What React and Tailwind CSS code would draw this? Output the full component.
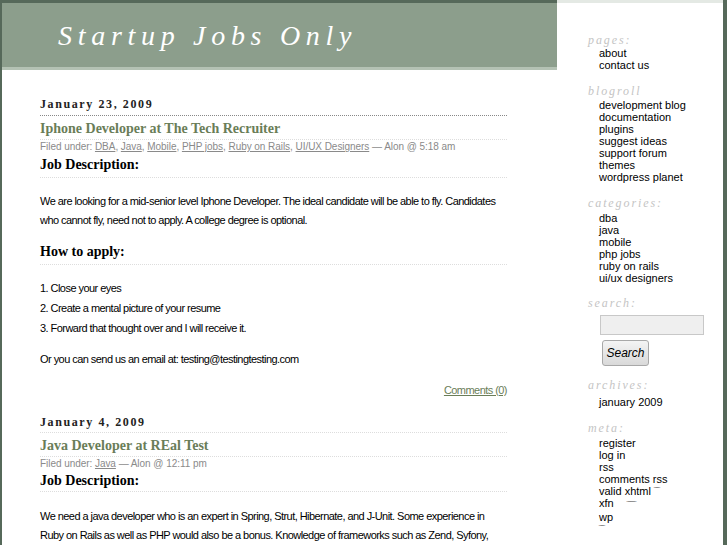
import React from 'react';

const serif = { fontFamily: '"Liberation Serif", "Times New Roman", serif' };
const sans = { fontFamily: '"Liberation Sans", Arial, sans-serif' };

const sidebar = [
    { title: 'pages:', items: ['about', 'contact us'] },
    {
        title: 'blogroll',
        items: ['development blog', 'documentation', 'plugins', 'suggest ideas', 'support forum', 'themes', 'wordpress planet'],
    },
    { title: 'categories:', items: ['dba', 'java', 'mobile', 'php jobs', 'ruby on rails', 'ui/ux designers'] },
];

const SideHeading = ({ children, className = '' }) => (
    <h2 style={serif} className={`text-[12px] leading-[14px] italic tracking-[1.9px] text-[#c4c4c4] ${className}`}>
        {children}
    </h2>
);

const SideList = ({ items, className = '' }) => (
    <ul style={sans} className={`pl-[11px] text-[11px] leading-[12px] text-black ${className}`}>
        {items.map((it) => (
            <li key={it}>{it}</li>
        ))}
    </ul>
);

const Filed = ({ cats, time }) => (
    <div style={sans} className="text-[10px] leading-[14px] tracking-[-0.05px] text-[#8a8a8a]">
        Filed under:{' '}
        {cats.map((c, i) => (
            <span key={c}>
                <a className="underline">{c}</a>
                {i < cats.length - 1 ? ', ' : ''}
            </span>
        ))}{' '}
        — Alon @ {time}
    </div>
);

const Body = ({ children, className = '' }) => (
    <p style={sans} className={`text-[11px] leading-[19px] tracking-[-0.55px] text-black ${className}`}>
        {children}
    </p>
);

export default function App() {
    return (
        <div className="w-[727px] h-[545px] overflow-hidden bg-white flex border-l-2 border-r-4 border-[#56695a]">
            {/* main column */}
            <div className="w-[555px] shrink-0">
                <div className="h-[70px] border-t-[3px] border-[#56695a] bg-[#8c9e8c] flex flex-col">
                    <div className="flex-1 flex items-center pl-[56px] pt-[1px]">
                        <h1 style={serif} className="text-[28px] italic tracking-[5.7px] text-white leading-none">
                            Startup Jobs Only
                        </h1>
                    </div>
                    <div className="h-[3px] bg-[#b4c2b4]" />
                </div>

                <div className="pl-[38px] pr-[50px]">
                    {/* post 1 */}
                    <div style={serif} className="mt-[26px] text-[12px] leading-[16px] tracking-[1.6px] font-bold text-[#222] pb-[3px] border-b border-dotted border-[#888]">
                        January 23, 2009
                    </div>
                    <h3 style={serif} className="mt-[3px] text-[14px] leading-[20px] font-bold text-[#6a7d58] border-b border-dotted border-[#ddd]">
                        Iphone Developer at The Tech Recruiter
                    </h3>
                    <Filed cats={['DBA', 'Java', 'Mobile', 'PHP jobs', 'Ruby on Rails', 'UI/UX Designers']} time="5:18 am" />
                    <h4 style={serif} className="mt-[1px] text-[14px] leading-[20px] font-bold text-black pb-[2px] border-b border-dotted border-[#ddd]">
                        Job Description:
                    </h4>
                    <Body className="mt-[14px]">
                        We are looking for a mid-senior level Iphone Developer. The ideal candidate will be able to fly. Candidates who cannot fly, need not to apply. A college degree is optional.
                    </Body>
                    <h4 style={serif} className="mt-[12px] text-[14px] leading-[20px] font-bold text-black pb-[2px] border-b border-dotted border-[#ddd]">
                        How to apply:
                    </h4>
                    <div style={sans} className="mt-[13px] text-[11px] leading-[20px] tracking-[-0.55px] text-black">
                        <div>1. Close your eyes</div>
                        <div>2. Create a mental picture of your resume</div>
                        <div>3. Forward that thought over and I will receive it.</div>
                    </div>
                    <Body className="mt-[11px] leading-[20px]">Or you can send us an email at: testing@testingtesting.com</Body>
                    <div style={sans} className="mt-[11px] text-right text-[11px] leading-[20px] tracking-[-0.55px] text-[#6a7d58] underline">
                        Comments (0)
                    </div>

                    {/* post 2 */}
                    <div style={serif} className="mt-[14px] text-[12px] leading-[16px] tracking-[1.6px] font-bold text-[#222] pb-[2px] border-b border-dotted border-[#ddd]">
                        January 4, 2009
                    </div>
                    <h3 style={serif} className="mt-[3px] text-[14px] leading-[20px] font-bold text-[#6a7d58] border-b border-dotted border-[#ddd]">
                        Java Developer at REal Test
                    </h3>
                    <Filed cats={['Java']} time="12:11 pm" />
                    <h4 style={serif} className="text-[14px] leading-[20px] font-bold text-black border-b border-dotted border-[#ddd]">
                        Job Description:
                    </h4>
                    <Body className="mt-[15px]">
                        We need a java developer who is an expert in Spring, Strut, Hibernate, and J-Unit. Some experience in Ruby on Rails as well as PHP would also be a bonus. Knowledge of frameworks such as Zend, Syfony, CakePHP is also a plus.
                    </Body>
                </div>
            </div>

            {/* sidebar */}
            <div className="flex-1 border-t-[3px] border-[#e4e9e4] pl-[31px] pt-[30px]">
                <SideHeading>{sidebar[0].title}</SideHeading>
                <SideList items={sidebar[0].items} />

                <SideHeading className="mt-[13px]">{sidebar[1].title}</SideHeading>
                <SideList items={sidebar[1].items} className="mt-[1px]" />

                <SideHeading className="mt-[13px]">{sidebar[2].title}</SideHeading>
                <SideList items={sidebar[2].items} className="mt-[2px]" />

                <SideHeading className="mt-[12px]">search:</SideHeading>
                <div className="pl-[12px]">
                    <input
                        type="text"
                        className="mt-[5px] block w-[104px] h-[20px] bg-[#efefef] border border-[#c8c8c8] outline-none"
                    />
                    <button
                        style={sans}
                        className="mt-[5px] ml-[2px] block w-[47px] h-[26px] rounded-[3px] border border-[#a8a8a8] bg-gradient-to-b from-[#f4f4f4] to-[#d9d9d9] text-[12px] italic text-black"
                    >
                        Search
                    </button>
                </div>

                <SideHeading className="mt-[12px]">archives:</SideHeading>
                <SideList items={['january 2009']} className="mt-[4px]" />

                <SideHeading className="mt-[13px]">meta:</SideHeading>
                <ul style={sans} className="mt-[2px] pl-[11px] text-[11px] leading-[12px] text-black">
                    <li>register</li>
                    <li>log in</li>
                    <li>rss</li>
                    <li>comments rss</li>
                    <li>
                        valid xhtml <span className="text-[8px] align-top tracking-[-1px] text-[#555]">‾‾‾</span>
                    </li>
                    <li>
                        xfn <span className="ml-[10px] text-[8px] tracking-[-1px] text-[#555]">‾‾‾‾‾</span>
                    </li>
                    <li>wp</li>
                    <li className="text-[8px] tracking-[-1px] text-[#555]">‾‾‾</li>
                </ul>
            </div>
        </div>
    );
}
